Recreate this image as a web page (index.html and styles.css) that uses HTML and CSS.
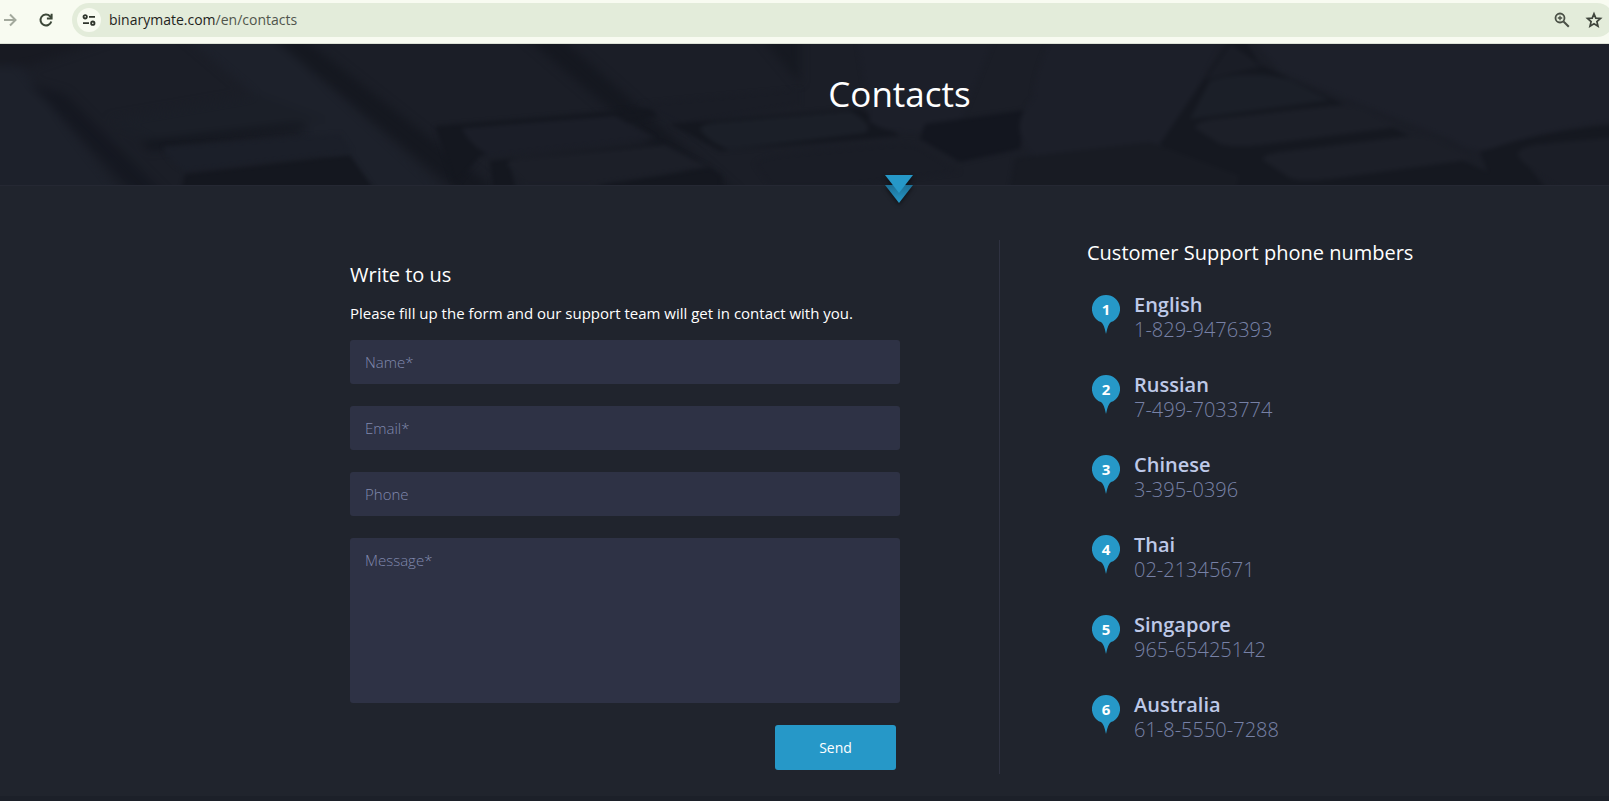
FILE: index.html
```html
<!DOCTYPE html>
<html lang="en">
<head>
<meta charset="utf-8">
<title>Contacts</title>
<link rel="stylesheet" href="styles.css">
</head>
<body>
<div class="toolbar">
  <button class="tool" aria-label="Forward"><svg width="20" height="20" viewBox="0 0 20 20" fill="none" stroke="#a3a99d" stroke-width="2"><path d="M4 10h11M10 4.500l5.500 5.500-5.500 5.500"/></svg></button>
  <button class="tool" aria-label="Reload"><svg width="20" height="20" viewBox="0 0 20 20" fill="none" stroke="#3c4738" stroke-width="2"><path d="M15.300 11.500A5.500 5.500 0 1 1 14 6.200l1.500 1.600"/><path d="M15.600 3.700v4.700h-4.700"/></svg></button>
  <div class="omnibox">
    <button class="site-info" aria-label="Site information"><svg width="16" height="16" viewBox="0 0 16 16" fill="none" stroke="#2f352c" stroke-width="1.800"><circle cx="4.200" cy="4.800" r="1.700"/><path d="M8 4.800h6M2 11.200h6"/><circle cx="11.800" cy="11.200" r="1.700"/></svg></button>
    <div class="url">binarymate.com<span class="path">/en/contacts</span></div>
    <button class="tool" aria-label="Zoom"><svg width="20" height="20" viewBox="0 0 20 20" fill="none" stroke="#4a5046"><circle cx="8" cy="8" r="4.500" stroke-width="1.800"/><path d="M11.500 11.500l5.300 5.300" stroke-width="2"/><path d="M8 5.800v4.400M5.800 8h4.400" stroke-width="1.300"/></svg></button>
    <button class="tool" aria-label="Bookmark"><svg width="20" height="20" viewBox="0 0 20 20" fill="none" stroke="#3f453c" stroke-width="1.700"><path d="M10 3.800l1.800 4.300 4.700.4-3.600 3.100 1.100 4.600-4-2.500-4 2.500 1.100-4.600-3.600-3.100 4.700-.4z"/></svg></button>
  </div>
</div>

<header class="hero">
  <svg class="hero-art" viewBox="0 0 1609 141" preserveAspectRatio="xMidYMid slice" aria-hidden="true">
    <defs>
      <filter id="soft" x="-5%" y="-20%" width="110%" height="140%" color-interpolation-filters="sRGB"><feGaussianBlur stdDeviation="5"/></filter>
      <filter id="fine" x="-5%" y="-20%" width="110%" height="140%" color-interpolation-filters="sRGB"><feGaussianBlur stdDeviation="2"/></filter>
    </defs>
    <rect width="1609" height="141" fill="#1b1e27"/>
    <g filter="url(#soft)">
      <path d="M-20 20L20 22 130 161H-20z" fill="#1d212b"/>
      <path d="M170 -20H260L460 161H385z" fill="#1d212b"/>
      <path d="M30 40L65 50 175 161H145z" fill="#151821"/>
      <path d="M-20 -20H150L30 22 -20 20z" fill="#181a22"/>
      <path d="M255 -20H285L515 161H475z" fill="#151820"/>
      <path d="M510 -20H545L750 161H722z" fill="#151820"/>
      <path d="M750 -20H800V40z" fill="#161921"/>
      <path d="M110 76L260 50 330 76 155 99z" fill="#1b1f28"/>
      <path d="M140 98L300 80 310 84 150 106z" fill="#13161e"/>
    </g>
    <g filter="url(#fine)">
      <path d="M185 130L350 111 385 161H178z" fill="#14171f"/>
      <path d="M163 103L340 90 352 108 185 127Q168 118 163 103z" fill="#1b1f29"/>
      <path d="M435 82L650 64 658 72 480 112 455 141z" fill="#14171f"/>
      <path d="M462 84L615 72 655 94 490 112Q468 100 462 84z" fill="#1b1e28"/>
      <path d="M490 117L660 99 665 101 510 122 520 161H495z" fill="#14171f"/>
      <path d="M508 122Q505 116 520 114L665 101 708 123 590 141H525z" fill="#1c1f28"/>
      <path d="M600 141L710 124 722 132 720 161H600z" fill="#14171f"/>
      <path d="M640 60L800 45V60L680 80z" fill="#1a1d26"/>
      <path d="M670 80L860 64 900 92 720 107z" fill="#14171f"/>
      <path d="M700 85Q700 80 718 78L850 67Q876 82 865 89L730 106Q708 98 700 85z" fill="#1b1f28"/>
      <path d="M755 120Q760 113 790 110L895 100Q915 98 930 110L960 128 850 141H770z" fill="#1a1d26"/>
      <path d="M855 -20H1000L960 80Q900 98 870 78z" fill="#1c1f29"/>
      <path d="M925 80L1025 66 1020 105 960 118 920 95z" fill="#13161f"/>
      <path d="M1060 -20H1230L1170 100 1035 115Q1005 84 1033 54Q1035 20 1060 -20z" fill="#1c1f29"/>
      <path d="M1230 -4L1160 100 1240 161H1560L1420 97 1260 20 1245 -4z" fill="#151820"/>
      <path d="M1190 75L1210 37Q1240 25 1290 35L1330 56z" fill="#1b1f28"/>
      <path d="M1205 36L1230 0 1262 22z" fill="#1a1d26"/>
      <path d="M1195 84Q1195 78 1215 75L1340 61Q1360 60 1370 67L1398 83 1260 101Q1235 104 1220 100z" fill="#1c1f28"/>
      <path d="M1263 116Q1262 111 1280 108L1410 92Q1430 90 1440 97L1475 115 1330 135Q1300 138 1290 134z" fill="#1c1f28"/>
      <path d="M1240 -20H1629V76Q1560 82 1492 105Q1470 110 1450 95L1280 28z" fill="#1d202a"/>
      <path d="M1480 108Q1550 84 1629 80V95L1540 100 1518 110 1560 161H1500z" fill="#151820"/>
      <path d="M1518 112Q1515 104 1540 100L1629 92V161H1590Q1530 130 1518 112z" fill="#1b1e27"/>
      <path d="M1015 114L1150 98 1240 132 1230 161H1007z" fill="#181b23"/>
    </g>
  </svg>
  <h1 class="hero-title">Contacts</h1>
  <svg class="hero-arrow" width="36" height="36" viewBox="0 0 36 36" aria-hidden="true">
    <defs>
      <linearGradient id="under" x1="0" y1="0" x2="0" y2="1"><stop offset="0" stop-color="#1d6f95"/><stop offset="1" stop-color="#2698c8"/></linearGradient>
    </defs>
    <path d="M4 14H32L18 32z" fill="url(#under)"/>
    <path d="M4 4H32L18 22z" fill="#2698c8"/>
  </svg>
</header>

<main class="content">
  <section class="write">
    <h2 class="heading">Write to us</h2>
    <p class="lead">Please fill up the form and our support team will get in contact with you.</p>
    <form class="form">
      <input class="field" type="text" aria-label="Name" placeholder="Name*">
      <input class="field" type="email" aria-label="Email" placeholder="Email*">
      <input class="field" type="tel" aria-label="Phone" placeholder="Phone">
      <textarea class="field message" aria-label="Message" placeholder="Message*"></textarea>
      <button class="send" type="button">Send</button>
    </form>
  </section>
  <section class="support">
    <h2 class="heading">Customer Support phone numbers</h2>
    <ol class="phones">
      <li class="phone"><span class="pin"><svg class="pin-shape" viewBox="0 0 28 39"><path d="M14 0a14 14 0 0 1 5 27.100Q16 29 14 39Q12 29 9 27.100A14 14 0 0 1 14 0z"/></svg><b class="pin-number">1</b></span><div><h3 class="language">English</h3><p class="number">1-829-9476393</p></div></li>
      <li class="phone"><span class="pin"><svg class="pin-shape" viewBox="0 0 28 39"><path d="M14 0a14 14 0 0 1 5 27.100Q16 29 14 39Q12 29 9 27.100A14 14 0 0 1 14 0z"/></svg><b class="pin-number">2</b></span><div><h3 class="language">Russian</h3><p class="number">7-499-7033774</p></div></li>
      <li class="phone"><span class="pin"><svg class="pin-shape" viewBox="0 0 28 39"><path d="M14 0a14 14 0 0 1 5 27.100Q16 29 14 39Q12 29 9 27.100A14 14 0 0 1 14 0z"/></svg><b class="pin-number">3</b></span><div><h3 class="language">Chinese</h3><p class="number">3-395-0396</p></div></li>
      <li class="phone"><span class="pin"><svg class="pin-shape" viewBox="0 0 28 39"><path d="M14 0a14 14 0 0 1 5 27.100Q16 29 14 39Q12 29 9 27.100A14 14 0 0 1 14 0z"/></svg><b class="pin-number">4</b></span><div><h3 class="language">Thai</h3><p class="number">02-21345671</p></div></li>
      <li class="phone"><span class="pin"><svg class="pin-shape" viewBox="0 0 28 39"><path d="M14 0a14 14 0 0 1 5 27.100Q16 29 14 39Q12 29 9 27.100A14 14 0 0 1 14 0z"/></svg><b class="pin-number">5</b></span><div><h3 class="language">Singapore</h3><p class="number">965-65425142</p></div></li>
      <li class="phone"><span class="pin"><svg class="pin-shape" viewBox="0 0 28 39"><path d="M14 0a14 14 0 0 1 5 27.100Q16 29 14 39Q12 29 9 27.100A14 14 0 0 1 14 0z"/></svg><b class="pin-number">6</b></span><div><h3 class="language">Australia</h3><p class="number">61-8-5550-7288</p></div></li>
    </ol>
  </section>
</main>
<footer class="footer"></footer>
</body>
</html>
```
FILE: styles.css
```css
* {
  box-sizing: border-box;
}

body {
  margin: 0;
  min-height: 100vh;
  display: flex;
  flex-direction: column;
  overflow-x: hidden;
  background: #20242d;
  color: #fff;
  font-family: "Open Sans", "Noto Sans", sans-serif;
}

h1,
h2,
h3,
p,
ol {
  margin: 0;
  padding: 0;
}

button {
  border: 0;
  padding: 0;
  background: none;
  font: inherit;
}

svg {
  display: block;
}

/* Browser bar */
.toolbar {
  display: flex;
  align-items: flex-start;
  height: 44px;
  padding-top: 3px;
  background: #f8fbf1;
  border-bottom: 1px solid #dde2d6;
}

.tool {
  display: flex;
  align-items: center;
  justify-content: center;
  flex: none;
  width: 32px;
  height: 34px;
}

.toolbar > .tool {
  width: 36px;
  margin-left: -8px;
}

.toolbar > .tool + .tool {
  margin-left: 0;
}

.omnibox {
  flex: 1;
  display: flex;
  align-items: center;
  height: 34px;
  margin-left: 8px;
  margin-right: -5px;
  padding: 0 4px 0 5px;
  border-radius: 17px;
  background: #e3ecda;
}

.site-info {
  display: flex;
  align-items: center;
  justify-content: center;
  width: 24px;
  height: 24px;
  border-radius: 50%;
  background: #f8fbf1;
}

.url {
  flex: 1;
  margin-left: 8px;
  color: #1f241d;
  font-size: 14px;
  line-height: 20px;
}

.path {
  color: #50564c;
}

/* Banner */
.hero {
  position: relative;
  height: 142px;
  padding-left: 190px;
  border-bottom: 1px solid #252833;
}

.hero-art {
  position: absolute;
  inset: 0;
  width: 100%;
  height: 100%;
}

.hero-title {
  position: relative;
  padding-top: 26px;
  font-size: 35px;
  font-weight: 400;
  line-height: 48px;
  text-align: center;
}

.hero-arrow {
  position: absolute;
  left: calc(50% + 76px);
  bottom: -22px;
  filter: drop-shadow(0 2px 2px rgba(0, 0, 0, 0.5));
}

/* Contact area */
.content {
  display: flex;
  padding: 54px 0 22px 350px;
}

.write {
  width: 650px;
  padding: 22px 99px 4px 0;
  border-right: 1px solid #2f3241;
}

.heading {
  font-size: 20px;
  font-weight: 400;
  line-height: 26px;
}

.lead {
  margin: 14px 0 16px;
  font-size: 15px;
  font-weight: 500;
  line-height: 22px;
}

.form {
  display: flex;
  flex-direction: column;
  gap: 22px;
}

.field {
  width: 100%;
  height: 44px;
  padding: 0 15px;
  border: 0;
  border-radius: 3px;
  background: #2e3245;
  color: #fff;
  font-family: inherit;
  font-size: 15px;
  font-weight: 300;
  line-height: 22px;
}

.field::placeholder {
  color: #8089ae;
  opacity: 1;
}

.message {
  height: 165px;
  padding: 11px 15px;
  resize: none;
}

.send {
  align-self: flex-end;
  width: 121px;
  height: 45px;
  margin-right: 4px;
  border-radius: 3px;
  background: #2698c8;
  color: #fff;
  font-size: 14px;
  font-weight: 500;
}

.support {
  flex: 1;
  padding-left: 87px;
}

.phones {
  display: flex;
  flex-direction: column;
  gap: 30px;
  margin-top: 26px;
  list-style: none;
}

.phone {
  display: flex;
  gap: 14px;
  padding-left: 5px;
}

.pin {
  position: relative;
  width: 28px;
  padding-top: 3px;
}

.pin-shape {
  width: 28px;
  height: 39px;
  fill: #2698c8;
}

.pin-number {
  position: absolute;
  top: 3px;
  left: 0;
  width: 28px;
  font-size: 15px;
  line-height: 28px;
  text-align: center;
}

.language {
  color: #bec9e8;
  font-size: 20px;
  font-weight: 600;
  line-height: 25px;
}

.number {
  color: #7781a6;
  font-size: 20px;
  font-weight: 300;
  line-height: 25px;
}

.footer {
  flex: 1;
  background: #1c2029;
}
```
